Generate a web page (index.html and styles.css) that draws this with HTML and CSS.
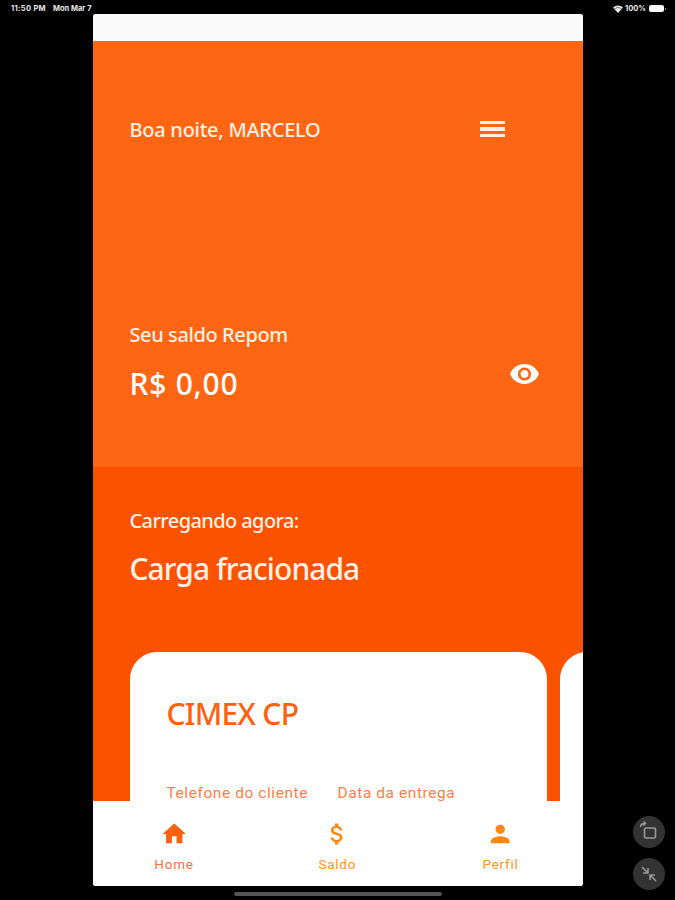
FILE: index.html
```html
<!DOCTYPE html>
<html lang="pt-BR">
<head>
    <meta charset="UTF-8">
    <meta name="viewport" content="width=device-width, initial-scale=1.0">
    <title>Saldo Repom</title>
    <link rel="stylesheet" href="styles.css">
</head>
<body>
    <div class="status">
        <span class="time">11:50 PM</span>
        <span class="date">Mon Mar 7</span>
        <svg class="wifi" viewBox="0 0 20 16"><path d="M0 5a14 14 0 0 1 20 0L10 16z"/><path d="M3 8a10 10 0 0 1 14 0" fill="none" stroke="#000" stroke-width="1"/></svg>
        <span class="percent">100%</span>
        <span class="battery"></span>
        <span class="nub"></span>
    </div>

    <div class="phone">
        <div class="topbar"></div>
        <header class="balance">
            <div class="greeting">
                <p class="label hello">Boa noite, MARCELO</p>
                <div class="menu"><i></i><i></i><i></i></div>
            </div>
            <p class="label saldo">Seu saldo Repom</p>
            <div class="amount">
                <p class="big money">R$ 0,00</p>
                <svg class="eye" viewBox="1 4.5 22 15"><path d="M12 4.5C7 4.5 2.73 7.61 1 12c1.73 4.39 6 7.5 11 7.5s9.27-3.11 11-7.5c-1.73-4.39-6-7.5-11-7.5zM12 17c-2.76 0-5-2.24-5-5s2.24-5 5-5 5 2.24 5 5-2.24 5-5 5zm0-8c-1.66 0-3 1.34-3 3s1.34 3 3 3 3-1.34 3-3-1.34-3-3-3z"/></svg>
            </div>
        </header>

        <main class="loads">
            <p class="label loading">Carregando agora:</p>
            <h1 class="big load">Carga fracionada</h1>
            <div class="cards">
                <div class="card">
                    <h2 class="big client">CIMEX CP</h2>
                    <div class="fields">
                        <span class="phone-field">Telefone do cliente</span>
                        <span class="date-field">Data da entrega</span>
                    </div>
                </div>
                <div class="card"></div>
            </div>
        </main>

        <nav class="tabs">
            <a class="tab active">
                <svg viewBox="0 0 24 24"><path d="M10 20v-6h4v6h5v-8h3L12 3 2 12h3v8z"/></svg>
                <span>Home</span>
            </a>
            <a class="tab">
                <svg viewBox="0 0 24 24"><path d="M11.8 10.9c-2.27-.59-3-1.2-3-2.15 0-1.09 1.01-1.85 2.7-1.85 1.78 0 2.44.85 2.5 2.1h2.21c-.07-1.72-1.12-3.3-3.21-3.81V3h-3v2.16c-1.94.42-3.5 1.68-3.5 3.61 0 2.31 1.91 3.46 4.7 4.13 2.5.6 3 1.48 3 2.41 0 .69-.49 1.79-2.7 1.79-2.06 0-2.87-.92-2.98-2.1h-2.2c.12 2.19 1.76 3.42 3.68 3.83V21h3v-2.15c1.95-.37 3.5-1.5 3.5-3.55 0-2.84-2.43-3.81-4.7-4.4z"/></svg>
                <span>Saldo</span>
            </a>
            <a class="tab">
                <svg viewBox="0 0 24 24"><path d="M12 12c2.21 0 4-1.79 4-4s-1.79-4-4-4-4 1.79-4 4 1.79 4 4 4zm0 2c-2.67 0-8 1.34-8 4v2h16v-2c0-2.66-5.33-4-8-4z"/></svg>
                <span>Perfil</span>
            </a>
        </nav>
    </div>
    <div class="home-bar"></div>

    <div class="controls">
        <div class="control">
            <svg viewBox="0 0 32 32"><rect x="11.5" y="12" width="11" height="10" rx="1.5"/><path d="M7.500 11c0-2 1.500-3.500 4.500-3.500M10.500 5.500l2 2-2 2"/></svg>
        </div>
        <div class="control">
            <svg viewBox="0 0 32 32"><path d="M9 9l6 6M15 10v5h-5M23 23l-6-6M17 22v-5h5"/></svg>
        </div>
    </div>
</body>
</html>
```
FILE: styles.css
```css
* {
    box-sizing: border-box;
}
body {
    margin: 0;
    height: 900px;
    overflow: hidden;
    background: #000;
    font-family: 'Noto Sans', 'Open Sans', sans-serif;
}
p, h1, h2 {
    margin: 0;
}
.status {
    display: flex;
    align-items: center;
    height: 14px;
    padding: 3px 9px 0 11px;
    color: #e8e8e8;
    font: bold 7.5px/10px Inter, sans-serif;
    white-space: nowrap;
}
.time {
    width: 42px;
    letter-spacing: 0.3px;
}
.wifi {
    width: 10px;
    height: 8px;
    margin-left: auto;
    fill: #e8e8e8;
}
.percent {
    width: 24px;
    margin-left: 2px;
}
.battery {
    width: 15px;
    height: 7px;
    border-radius: 2px;
    background: #fff;
}
.nub {
    width: 1px;
    height: 2px;
    margin-left: 1px;
    background: #888;
}
.phone {
    display: flex;
    flex-direction: column;
    width: 490.500px;
    height: 872px;
    margin-left: 92.500px;
    border-radius: 3px;
    overflow: hidden;
    background: #fff;
}
.topbar {
    height: 27px;
    background: #fafafa;
}
.balance {
    height: 426px;
    padding: 74px 44px 0 37px;
    background: #ff6614;
    color: #fff0e4;
}
.greeting {
    display: flex;
    justify-content: space-between;
    align-items: center;
    height: 28px;
    padding-right: 34px;
}
.label {
    font-size: 20px;
    line-height: 29px;
    font-weight: 500;
    white-space: nowrap;
}
.hello {
    letter-spacing: -0.27px;
}
.menu {
    display: flex;
    flex-direction: column;
    gap: 3px;
    width: 25px;
}
.menu i {
    height: 3.500px;
    background: #fff0e4;
}
.saldo {
    margin-top: 177px;
    letter-spacing: -0.4px;
}
.amount {
    display: flex;
    justify-content: space-between;
    margin-top: 15px;
    color: #fff;
}
.big {
    font-size: 30px;
    line-height: 40px;
    font-weight: 500;
    white-space: nowrap;
}
.money {
    letter-spacing: 0.75px;
}
.eye {
    width: 29px;
    height: 20px;
    fill: #fff;
}
.loads {
    height: 334px;
    padding: 39px 0 0 37px;
    overflow: hidden;
    background: #fb5200;
    color: #fff0e4;
}
.loading {
    letter-spacing: -0.6px;
}
.load {
    margin-top: 14px;
    letter-spacing: -0.95px;
}
.cards {
    display: flex;
    gap: 13px;
    margin-top: 63px;
}
.card {
    flex: none;
    width: 417px;
    height: 190px;
    padding: 42px 37px;
    border-radius: 27px;
    background: #fff;
    color: #ff6010;
}
.client {
    letter-spacing: -0.7px;
}
.fields {
    display: flex;
    margin-top: 49px;
    font: 15.5px/20px Roboto, sans-serif;
    letter-spacing: 0.57px;
    color: #ff8045;
    white-space: nowrap;
}
.phone-field {
    width: 171px;
}
.tabs {
    display: flex;
    justify-content: space-between;
    height: 85px;
    padding: 19px 42px 0 41px;
    background: #fff;
}
.tab {
    display: flex;
    flex-direction: column;
    align-items: center;
    width: 81px;
    color: #ff9420;
    font: 13.5px/18px Roboto, sans-serif;
    letter-spacing: 0.75px;
}
.tab svg {
    width: 28.500px;
    height: 28px;
    margin-bottom: 7px;
    fill: #ff860f;
}
.active {
    color: #ff7038;
}
.active svg {
    fill: #ff6010;
}
.home-bar {
    width: 208px;
    height: 4px;
    margin: 6px auto 0;
    border-radius: 2px;
    background: #555;
}
/* floating buttons over the black margin */
.controls {
    position: absolute;
    right: 10px;
    top: 816px;
    display: grid;
    gap: 10px;
}
.control {
    width: 32px;
    height: 32px;
    border-radius: 50%;
    background: #333;
}
.control svg {
    display: block;
    fill: none;
    stroke: #999;
    stroke-width: 1.6;
}
```
